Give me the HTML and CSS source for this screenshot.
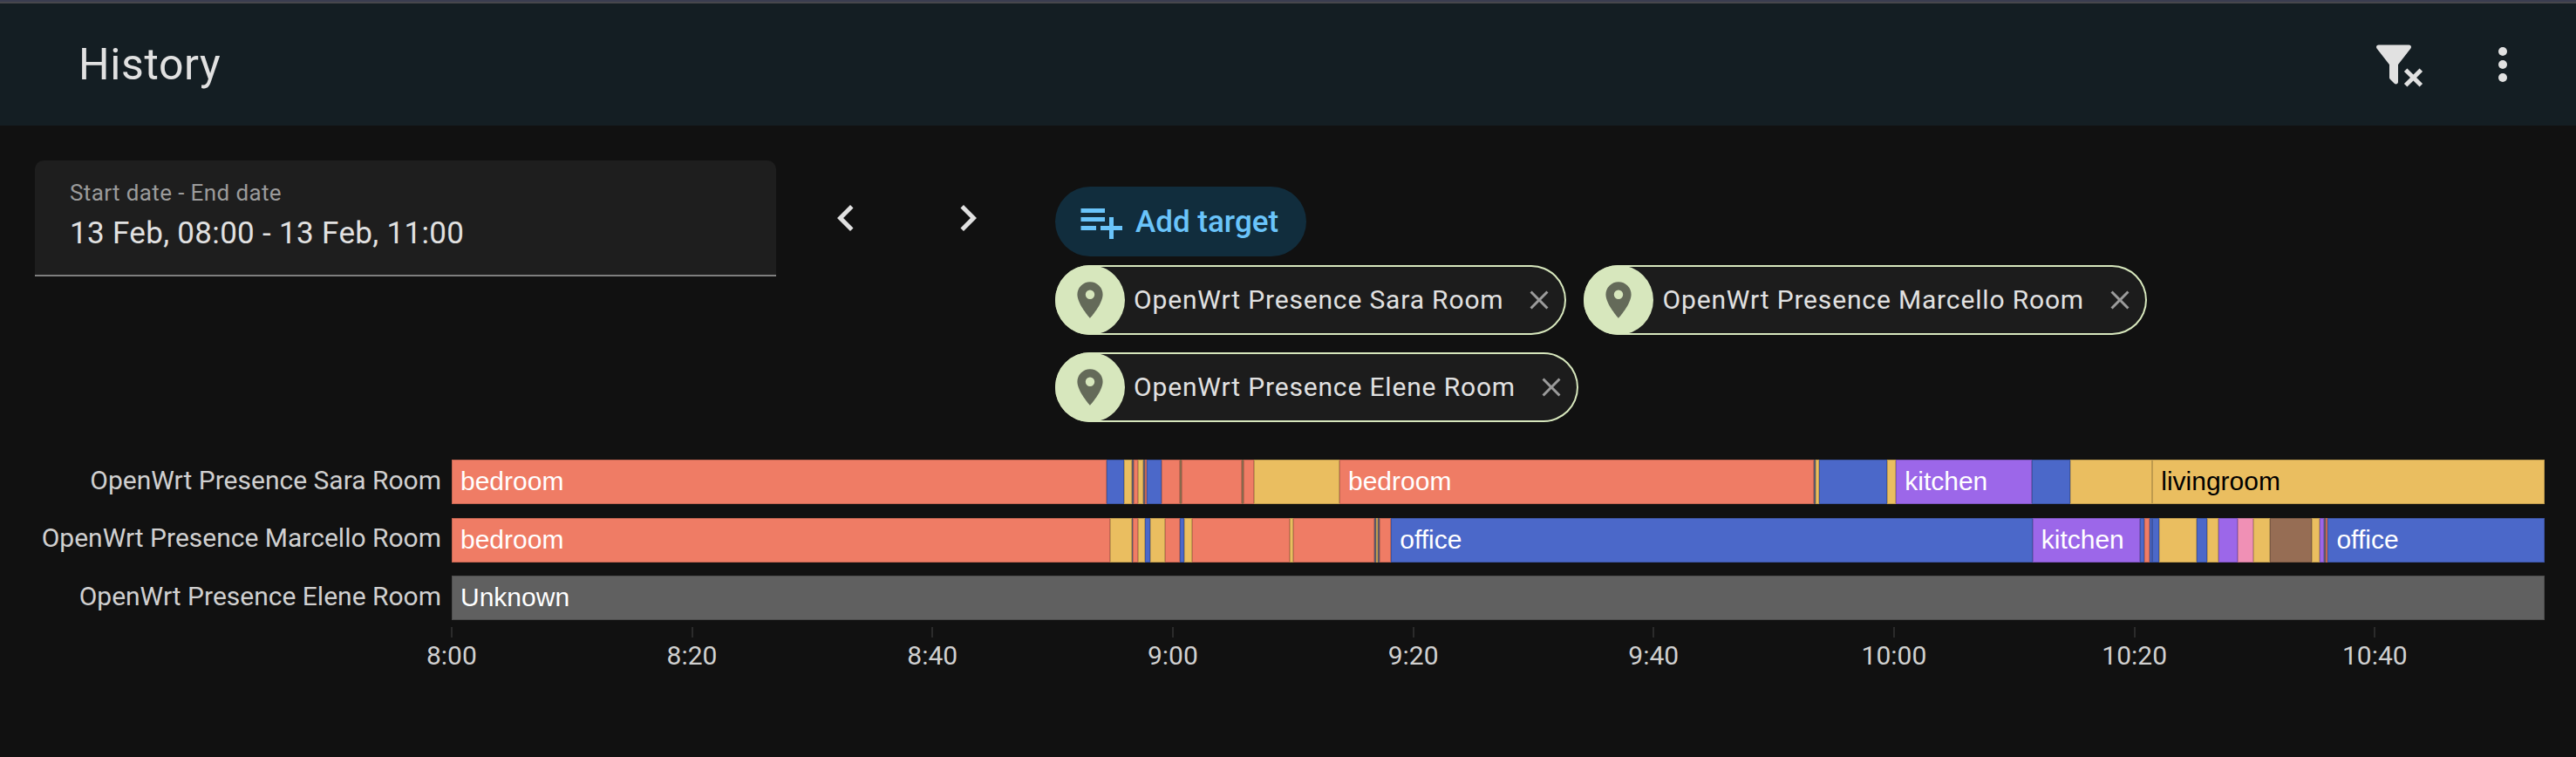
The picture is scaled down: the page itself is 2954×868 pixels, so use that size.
FILE: index.html
```html
<!DOCTYPE html>
<html lang="en">
<head>
  <meta charset="UTF-8" />
  <meta name="viewport" content="width=device-width, initial-scale=1.0"/>
  <title>History</title>
  <link rel="stylesheet" href="styles.css">
</head>
<body>

  <header class="toolbar">
    <h1>History</h1>
    <button class="icon-btn" aria-label="Remove filter">
      <svg class="icon" viewBox="0 0 24 24"><path d="M14.76,20.83L17.6,18L14.76,15.17L16.17,13.76L19,16.57L21.83,13.76L23.24,15.17L20.43,18L23.24,20.83L21.83,22.24L19,19.4L16.17,22.24L14.76,20.83M12,12V19.88C12.04,20.18 11.94,20.5 11.71,20.71C11.32,21.1 10.69,21.1 10.3,20.71L8.29,18.7C8.06,18.47 7.96,18.16 8,17.87V12H7.97L2.21,4.62C1.87,4.19 1.95,3.56 2.38,3.22C2.57,3.08 2.78,3 3,3H17C17.22,3 17.43,3.08 17.62,3.22C18.05,3.56 18.13,4.19 17.79,4.62L12.03,12H12Z"/></svg>
    </button>
    <button class="icon-btn" aria-label="Menu">
      <svg class="icon" viewBox="0 0 24 24"><circle cx="12" cy="6" r="2"/><circle cx="12" cy="12" r="2"/><circle cx="12" cy="18" r="2"/></svg>
    </button>
  </header>

  <section class="filters">
    <div class="date-range">
      <span class="date-label">Start date - End date</span>
      <span class="date-value">13 Feb, 08:00 - 13 Feb, 11:00</span>
    </div>
    <div class="nav">
      <button class="icon-btn" aria-label="Previous">
        <svg class="icon" viewBox="0 0 24 24"><path d="M15.41,16.58L10.83,12L15.41,7.41L14,6L8,12L14,18L15.41,16.58Z"/></svg>
      </button>
      <button class="icon-btn" aria-label="Next">
        <svg class="icon" viewBox="0 0 24 24"><path d="M8.59,16.58L13.17,12L8.59,7.41L10,6L16,12L10,18L8.59,16.58Z"/></svg>
      </button>
    </div>
    <div class="targets">
      <button class="add-target">
        <svg class="icon" viewBox="0 0 24 24"><path d="M3 16H10V14H3M18 14V10H16V14H12V16H16V20H18V16H22V14M14 6H3V8H14M14 10H3V12H14V10Z"/></svg>
        <span>Add target</span>
      </button>
      <div class="chips" id="chips"></div>
    </div>
  </section>

  <section class="chart">
    <div id="timeline"></div>
    <div class="axis" id="axis"></div>
  </section>

  <script>
    const chips = document.getElementById('chips');
    const timeline = document.getElementById('timeline');
    const axis = document.getElementById('axis');

    // Each segment: [state, end, label], positions from 0 to 2400
    const rows = [
      {
        name: 'OpenWrt Presence Sara Room',
        segments: [
          ['bedroom', 751.3, 'bedroom'], ['office', 771], ['livingroom', 780], ['mixed', 782],
          ['bedroom', 787.5], ['livingroom', 793.5], ['mixed', 795.5], ['bedroom', 797.5],
          ['office', 814], ['bedroom', 835], ['blend', 837], ['bedroom', 906.3], ['blend', 907.7],
          ['bedroom', 920.5], ['livingroom', 1018], ['bedroom', 1562.3, 'bedroom'],
          ['mixed', 1564.3], ['livingroom', 1568], ['office', 1646], ['livingroom', 1656.3],
          ['kitchen', 1812.5, 'kitchen'], ['office', 1856], ['livingroom', 1950.3],
          ['livingroom', 2400, 'livingroom']
        ]
      },
      {
        name: 'OpenWrt Presence Marcello Room',
        segments: [
          ['bedroom', 755.3, 'bedroom'], ['livingroom', 780], ['mixed', 781], ['bedroom', 787.5],
          ['livingroom', 795], ['office', 801.5], ['livingroom', 818.5], ['bedroom', 835.5],
          ['office', 840.5], ['livingroom', 848.8], ['bedroom', 961], ['livingroom', 965],
          ['bedroom', 1058.3], ['mixed', 1060], ['livingroom', 1062], ['mixed', 1064],
          ['bedroom', 1077.3], ['office', 1812.8, 'office'], ['kitchen', 1936.5, 'kitchen'],
          ['office', 1941.5], ['bedroom', 1947.5], ['office', 1950.5], ['office', 1958.5],
          ['livingroom', 2001], ['office', 2013], ['livingroom', 2026], ['kitchen', 2047.7],
          ['garden', 2066], ['livingroom', 2085], ['bathroom', 2133], ['livingroom', 2142],
          ['kitchen', 2147.5], ['mixed', 2149], ['bedroom', 2151.5], ['office', 2400, 'office']
        ]
      },
      {
        name: 'OpenWrt Presence Elene Room',
        segments: [['unknown', 2400, 'Unknown']]
      }
    ];

    const hours = ['8:00', '8:20', '8:40', '9:00', '9:20', '9:40', '10:00', '10:20', '10:40'];

    rows.forEach(row => {
      // Target chip
      chips.innerHTML += `
        <div class="chip">
          <span class="chip-icon">
            <svg viewBox="0 0 24 24"><path d="M12,11.5A2.5,2.5 0 0,1 9.5,9A2.5,2.5 0 0,1 12,6.5A2.5,2.5 0 0,1 14.5,9A2.5,2.5 0 0,1 12,11.5M12,2A7,7 0 0,0 5,9C5,14.25 12,22 12,22C12,22 19,14.25 19,9A7,7 0 0,0 12,2Z"/></svg>
          </span>
          <span class="chip-name">${row.name}</span>
          <svg class="chip-close" viewBox="0 0 24 24"><path d="M19,6.41L17.59,5L12,10.59L6.41,5L5,6.41L10.59,12L5,17.59L6.41,19L12,13.41L17.59,19L19,17.59L13.41,12L19,6.41Z"/></svg>
        </div>
      `;

      // Timeline row
      let start = 0;
      const bars = row.segments.map(([state, end, label]) => {
        const width = (end - start) / 24;
        start = end;
        return `<div class="segment ${state}" style="width: ${width}%">${label || ''}</div>`;
      }).join('');
      timeline.innerHTML += `
        <div class="row">
          <div class="row-name">${row.name}</div>
          <div class="bar">${bars}</div>
        </div>
      `;
    });

    hours.forEach(hour => {
      axis.innerHTML += `<div class="tick">${hour}</div>`;
    });
  </script>
</body>
</html>
```
FILE: styles.css
```css
* {
  box-sizing: border-box;
}

body {
  margin: 0;
  background: #111111;
  color: #e1e1e1;
  font-family: Roboto, sans-serif;
}

button {
  border: none;
  background: none;
  color: inherit;
  font-family: inherit;
  padding: 0;
  cursor: pointer;
}

svg {
  display: block;
  fill: currentColor;
}

.toolbar {
  display: flex;
  align-items: center;
  height: 144px;
  padding: 0 24px 0 90px;
  background: #141e23;
  border-top: 2px solid #3a3d50;
  box-shadow: inset 0 2px 0 #47474c;
}

h1 {
  flex: 1;
  margin: 0;
  padding-top: 2px;
  font-size: 50px;
  font-weight: 400;
  letter-spacing: 0.6px;
}

.toolbar .icon-btn {
  padding-top: 2px;
}

.icon-btn {
  display: flex;
  align-items: center;
  justify-content: center;
  width: 120px;
  height: 120px;
}

.icon {
  width: 60px;
  height: 60px;
}

.filters {
  display: flex;
  align-items: flex-start;
  padding: 40px 40px 0;
}

.date-range {
  display: flex;
  flex-direction: column;
  width: 850px;
  height: 133px;
  padding: 20px 40px 0;
  background: #1e1e1e;
  border-bottom: 2px solid #7f7f7f;
  border-radius: 10px 10px 0 0;
}

.date-label {
  color: #9b9b9b;
  font-size: 26px;
  line-height: 34px;
  letter-spacing: 0.38px;
}

.date-value {
  margin-top: 9px;
  font-size: 35px;
  line-height: 42px;
  letter-spacing: 0.32px;
}

.nav {
  display: flex;
  gap: 20px;
  padding: 6px 40px 0 20px;
}

.targets {
  flex: 1;
  padding-top: 30px;
}

.add-target {
  display: flex;
  align-items: center;
  gap: 10px;
  height: 80px;
  width: 288px;
  padding-left: 22px;
  border-radius: 40px;
  background: #112d3d;
  color: #6ac4fa;
  font-size: 35px;
  font-weight: 500;
}

.chips {
  display: flex;
  flex-wrap: wrap;
  gap: 20px;
  width: 1300px;
  margin-top: 10px;
}

.chip {
  display: flex;
  align-items: center;
  height: 80px;
  border-radius: 40px;
  padding-right: 13px;
  background: #1c1c1c;
  box-shadow: inset 0 0 0 2px #d7e7bd;
}

.chip-icon {
  display: flex;
  align-items: center;
  justify-content: center;
  width: 80px;
  height: 80px;
  border-radius: 50%;
  background: #d7e7bd;
  color: #646a59;
}

.chip-icon svg {
  width: 50px;
  height: 50px;
}

.chip-name {
  padding: 0 23px 2px 10px;
  font-size: 30px;
  letter-spacing: 0.84px;
}

.chip-close {
  width: 36px;
  height: 36px;
  color: #9b9b9b;
}

.chart {
  padding: 43px 36px 0 40px;
}

.row {
  display: flex;
  align-items: center;
  height: 51px;
  margin-bottom: 15.7px;
}

.row-name {
  width: 478px;
  padding: 0 12px 5px 0;
  color: #d0d0d0;
  font-size: 30px;
  text-align: right;
  white-space: nowrap;
}

.bar {
  display: flex;
  width: 2400px;
  height: 51px;
}

.segment {
  flex: none;
  overflow: hidden;
  box-shadow: inset 0 0 0 1px rgba(0, 0, 0, 0.18);
  color: #fff;
  font: 30px/50px "Liberation Sans", sans-serif;
  text-indent: 10px;
}

.bedroom { background: #ef7c65; }
.office { background: #4b68c9; }
.livingroom { background: #eabe60; color: #000; }
.kitchen { background: #9c67e9; }
.garden { background: #f090b5; }
.bathroom { background: #966d54; }
.unknown { background: #606060; }
.mixed { background: #6f6c80; }
.blend { background: #a8805c; }

.axis {
  display: flex;
  padding-left: 340px;
}

.tick {
  display: flex;
  flex: none;
  flex-direction: column;
  align-items: center;
  width: 275.7px;
  color: #d0d0d0;
  font-size: 30px;
  line-height: 38px;
}

.tick::before {
  content: "";
  width: 2px;
  height: 12px;
  margin: -8px 0 2px;
  background: #2b2b2b;
}
```
